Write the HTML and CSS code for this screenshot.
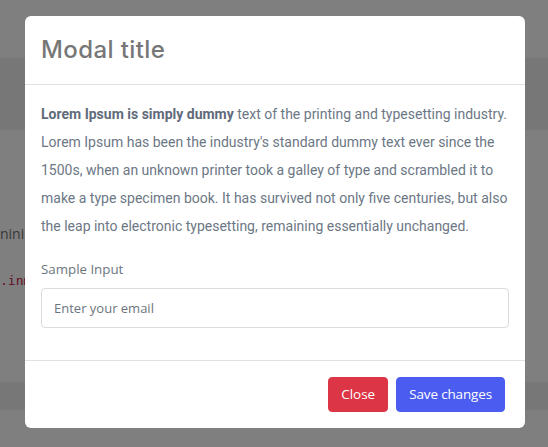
FILE: index.html
```html
<!DOCTYPE html>
<html lang="en">
<head>
<meta charset="utf-8">
<title>Modal</title>
<link rel="stylesheet" href="styles.css">
</head>
<body>
<div class="page">
  <div class="page-top"></div>
  <div class="page-band"></div>
  <div class="page-content">
    <p class="page-line">nining</p>
    <p class="page-code">.inmo</p>
  </div>
  <div class="page-foot"></div>
</div>

<div class="backdrop">
  <div class="modal">
    <div class="modal-header">
      <h5 class="modal-title">Modal title</h5>
    </div>
    <div class="modal-body">
      <p class="lead-text"><strong>Lorem Ipsum is simply dummy</strong> text of the printing and typesetting industry. Lorem Ipsum has been the industry's standard dummy text ever since the 1500s, when an unknown printer took a galley of type and scrambled it to make a type specimen book. It has survived not only five centuries, but also the leap into electronic typesetting, remaining essentially unchanged.</p>
      <div class="form-group">
        <label class="form-label" for="email">Sample Input</label>
        <input class="form-control" id="email" type="email" placeholder="Enter your email">
      </div>
    </div>
    <div class="modal-footer">
      <button class="btn btn-danger" type="button">Close</button>
      <button class="btn btn-primary" type="button">Save changes</button>
    </div>
  </div>
</div>
</body>
</html>
```

FILE: styles.css
```css
* { box-sizing: border-box; }

html, body {
  margin: 0;
  padding: 0;
  height: 100%;
  overflow: hidden;
}

body {
  background: #ffffff;
  font-family: Roboto, "Liberation Sans", sans-serif;
}

/* underlying page */
.page {
  display: flex;
  flex-direction: column;
}
.page-top { height: 58px; background: #ffffff; }
.page-band { height: 72px; background: #efefef; }
.page-content {
  height: 252px;
  padding-top: 95px;
  display: flex;
  flex-direction: column;
  gap: 29px;
}
.page-line {
  margin: 0;
  font-family: "Open Sans", sans-serif;
  font-size: 14px;
  line-height: 18px;
  color: #707070;
  white-space: nowrap;
}
.page-code {
  margin: 0;
  font-family: "DejaVu Sans Mono", monospace;
  font-size: 13px;
  line-height: 18px;
  color: #c7254e;
  white-space: nowrap;
}
.page-foot { height: 28px; background: #efefef; }

/* overlay */
.backdrop {
  position: fixed;
  inset: 0;
  background: rgba(0, 0, 0, 0.5);
  display: flex;
  justify-content: center;
  align-items: flex-start;
  padding-top: 16px;
  padding-left: 2px;
}

.modal {
  width: 500px;
  background: #ffffff;
  border-radius: 6px;
  display: flex;
  flex-direction: column;
}

.modal-header {
  padding: 16px 16px 17px;
  border-bottom: 1px solid #dee2e6;
}
.modal-title {
  margin: 0;
  font-family: Inter, "Noto Sans", sans-serif;
  font-weight: 500;
  font-size: 24px;
  line-height: 35px;
  color: #777777;
  letter-spacing: 0.4px;
}

.modal-body {
  padding: 15px 16px 16px;
}
.lead-text {
  margin: 0 0 19px;
  font-family: Roboto, sans-serif;
  font-size: 14px;
  line-height: 28px;
  color: #6c7785;
}
.lead-text strong {
  font-weight: 700;
  color: #5f6b7a;
}

.form-group {
  display: flex;
  flex-direction: column;
  margin-bottom: 16px;
}
.form-label {
  font-family: "Open Sans", "Noto Sans", sans-serif;
  font-size: 13.3px;
  line-height: 21px;
  color: #6c757d;
  margin-bottom: 8px;
}
.form-control {
  height: 40px;
  padding: 0 12px;
  border: 1px solid #dcdcdc;
  border-radius: 4px;
  font-family: "Open Sans", "Noto Sans", sans-serif;
  font-size: 13px;
  color: #495057;
  background: #ffffff;
  outline: none;
}
.form-control::placeholder { color: #6c757d; opacity: 1; }

.modal-footer {
  display: flex;
  justify-content: flex-end;
  padding: 12px 16px;
  border-top: 1px solid #dee2e6;
}
.btn {
  margin: 4px;
  height: 35px;
  padding: 0 12px;
  border: 1px solid transparent;
  border-radius: 4px;
  font-family: "Open Sans", "Noto Sans", sans-serif;
  font-size: 13.5px;
  line-height: 21px;
  color: #ffffff;
  cursor: pointer;
}
.btn-primary { letter-spacing: -0.15px; }
.btn-danger { background: #dc3545; border-color: #dc3545; }
.btn-primary { background: #4b5cf0; border-color: #4b5cf0; }
```
